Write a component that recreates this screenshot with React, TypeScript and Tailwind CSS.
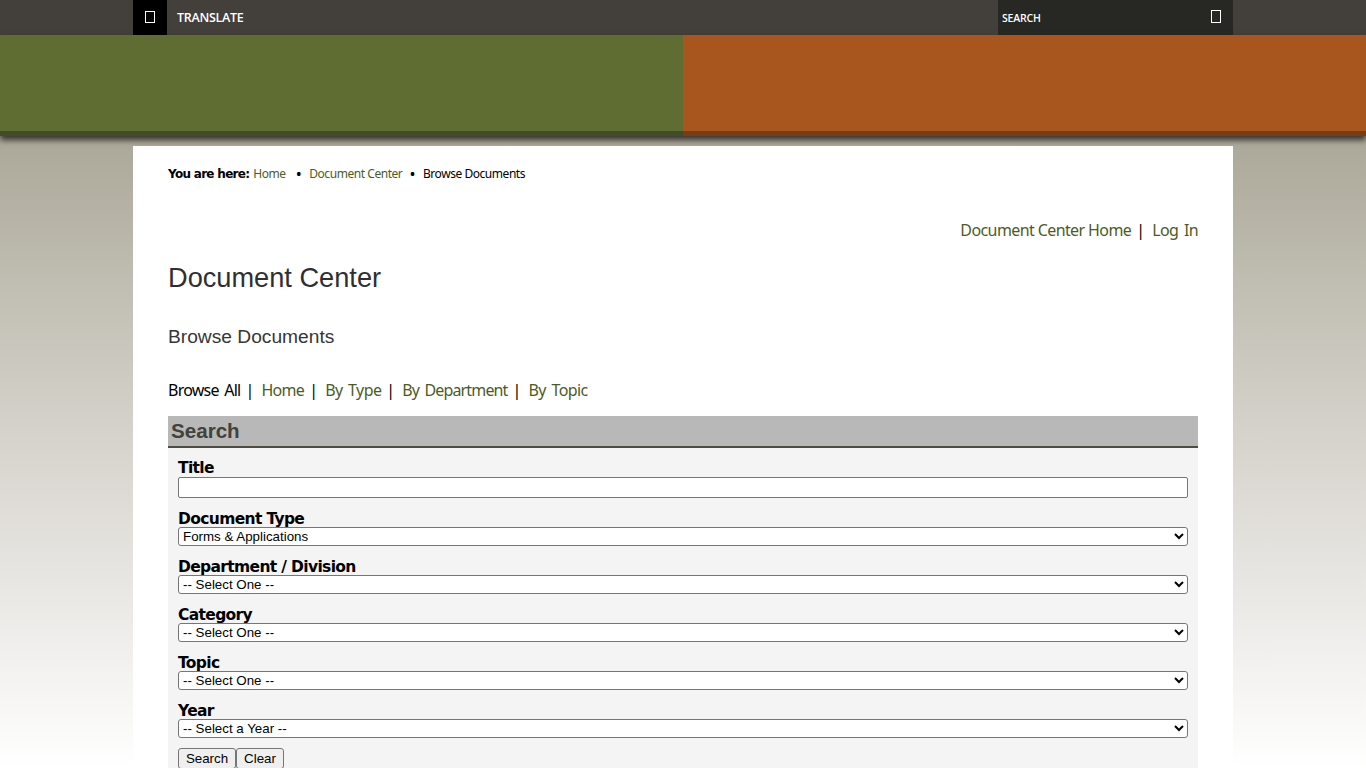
const linkCls = "text-[#4c5c1f]";

function Sep() {
  return <span className="inline-block ml-[5px] mr-[11px] w-[5px] text-black">|</span>;
}

function Field({ label, value }: { label: string; value: string }) {
  return (
    <div className="mt-[8px]">
      <div className="font-['DejaVu_Sans',sans-serif] font-bold text-[15.5px] leading-[18px] tracking-[-0.65px] text-black h-[21px] pt-[4px]">{label}</div>
      <select
        defaultValue={value}
        className="block w-full h-[19px] bg-white border border-[#767676] rounded-[3px] text-[13.33px] leading-[16px] text-black font-['Liberation_Sans',sans-serif]"
      >
        <option>{value}</option>
      </select>
    </div>
  );
}

export default function App() {
  return (
    <div className="h-screen overflow-hidden relative bg-[linear-gradient(to_bottom,#a8a595_0%,#a8a595_15%,#d4d1ca_55%,#ffffff_100%)] font-['Liberation_Sans',sans-serif]">
      {/* top bar */}
      <div className="h-[35px] bg-[#43403c]">
        <div className="w-[1100px] mx-auto flex h-full">
          <div className="w-[34px] h-full bg-black flex items-center justify-center">
            <div className="w-[10px] h-[12px] border border-white mr-[1px] mb-[1px]" />
          </div>
          <div className="pl-[10px] flex items-center text-[12.5px] text-white font-['Open_Sans',sans-serif] font-semibold tracking-[-0.3px] pt-[2px]">TRANSLATE</div>
          <div className="ml-auto w-[235px] h-full bg-[#272723] flex items-center justify-between pl-[4px] pr-[12px]">
            <span className="text-[10.5px] text-white font-['Open_Sans',sans-serif] font-semibold tracking-[-0.2px] mt-[3px]">SEARCH</span>
            <div className="w-[10px] h-[13px] border border-white mb-[2px]" />
          </div>
        </div>
      </div>
      {/* banner */}
      <div className="h-[101px] flex shadow-[0_4px_6px_rgba(0,0,0,0.7)] relative">
        <div className="flex-1 bg-[#5f6d33] border-b-[5px] border-[#424c26]" />
        <div className="flex-1 bg-[#a9561e] border-b-[5px] border-[#7c3c12]" />
      </div>
      {/* content */}
      <div className="w-[1100px] mx-auto mt-[10px] bg-white px-[35px] h-[700px]">
        <div className="pt-[20px] h-[16px] box-content text-[12px] leading-[16px] text-black flex items-center font-['Noto_Sans',sans-serif] tracking-[-0.45px]">
          <b className="font-['DejaVu_Sans',sans-serif] text-[12px] tracking-[-0.7px] font-bold">You are here:</b>
          <span className="ml-[4px] text-[#4c5c1f]">Home</span>
          <span className="ml-[10px] text-[16px] leading-[16px]">•</span>
          <span className="ml-[8px] text-[#4c5c1f]">Document Center</span>
          <span className="ml-[7px] text-[16px] leading-[16px]">•</span>
          <span className="ml-[8px]">Browse Documents</span>
        </div>
        <div className="mt-[36px] h-[24px] text-right text-[16px] leading-[24px] font-['Noto_Sans',sans-serif] tracking-[-0.6px]">
          <span className={linkCls}>Document Center Home</span>
          <Sep />
          <span className={`${linkCls} [word-spacing:2px]`}>Log In</span>
        </div>
        <h1 className="mt-[20px] text-[27.2px] leading-[32px] text-[#2f2f2f] font-normal">Document Center</h1>
        <h2 className="mt-[31px] text-[19.2px] leading-[24px] text-[#363636] font-normal">Browse Documents</h2>
        <div className="mt-[29px] h-[24px] text-[16px] leading-[24px] font-['Noto_Sans',sans-serif] tracking-[-0.6px] [word-spacing:2px] text-black">
          <span className="tracking-[-0.75px]">Browse All</span><Sep />
          <span className={`${linkCls} tracking-[-0.7px]`}>Home</span><Sep />
          <span className={linkCls}>By Type</span><Sep />
          <span className={`${linkCls} tracking-[-0.85px]`}>By Department</span><Sep />
          <span className={linkCls}>By Topic</span>
        </div>
        <div className="mt-[14px] bg-[#f4f4f4]">
          <div className="h-[32px] bg-[#b8b8b8] border-b-2 border-[#4e4c3f] pl-[3px] text-[20.6px] leading-[30px] font-bold text-[#43423a]">Search</div>
          <div className="px-[10px] pb-[20px]">
            <div className="pt-[10px]">
              <div className="font-['DejaVu_Sans',sans-serif] font-bold text-[15.5px] leading-[18px] tracking-[-0.65px] text-black h-[19px] pt-[1px]">Title</div>
              <input type="text" className="block w-full h-[21px] bg-white border border-[#767676] rounded-[2px]" />
            </div>
            <Field label="Document Type" value="Forms & Applications" />
            <Field label="Department / Division" value="-- Select One --" />
            <Field label="Category" value="-- Select One --" />
            <Field label="Topic" value="-- Select One --" />
            <Field label="Year" value="-- Select a Year --" />
            <div className="mt-[10px] flex">
              <button className="h-[21px] w-[58px] bg-[#efefef] border border-[#767676] rounded-[3px] text-[13.33px] leading-[19px] text-black">Search</button>
              <button className="h-[21px] w-[48px] bg-[#efefef] border border-[#767676] rounded-[3px] text-[13.33px] leading-[19px] text-black">Clear</button>
            </div>
          </div>
        </div>
      </div>
    </div>
  );
}
